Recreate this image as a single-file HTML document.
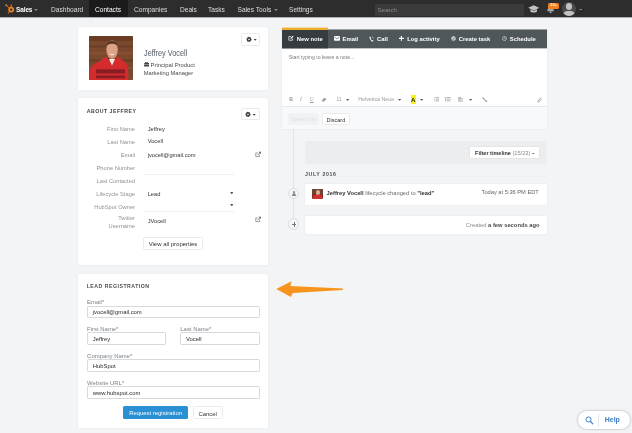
<!DOCTYPE html>
<html><head><meta charset="utf-8">
<style>
*{box-sizing:border-box;margin:0;padding:0}
html,body{width:632px;height:433px;overflow:hidden}
body{background:#f2f4f6;font-family:"Liberation Sans",sans-serif;position:relative;color:#444;font-size:5.72px}
#root{position:absolute;left:0;top:0;width:632px;height:433px;filter:blur(.3px);background:#f2f4f6}
.abs,.abs *{position:absolute}
.nav{left:0;top:0;width:632px;height:17.3px;background:#2d2d2d}
.nav span{color:#dedede;font-size:6.6px;top:5.8px;white-space:nowrap;line-height:8px}
.card{background:#fff;border-radius:1.5px;box-shadow:0 0 0 .5px #e8ebee}
.t{white-space:nowrap;line-height:8px}
.lbl{color:#8e9398;text-align:right;width:60px;left:-3px}
.val{color:#333;left:69.7px}
.inp{background:#fff;border:.6px solid #d6dadd;border-radius:1.2px;height:12.6px}
.inp span{left:4.7px;top:1.6px;font-size:5.86px;color:#2a2a2a;white-space:nowrap;line-height:8px}
.flbl{color:#7d8287;white-space:nowrap;line-height:7px;font-size:5.95px}
.btn{border:.6px solid #e8eaec;border-radius:1.5px;background:#fff;color:#333;text-align:center;white-space:nowrap}
.hd{color:#fff;font-weight:bold;font-size:5.85px;top:7.7px}
</style></head><body><div id="root">
<div class="abs" style="left:0;top:17px;width:632px;height:1px;background:rgba(45,45,45,.35)"></div>
<div class="abs nav">
  <div style="left:89px;top:0;width:39px;height:17.3px;background:#1b1b1b"></div>
  <svg style="left:0;top:0" width="20" height="17" viewBox="0 0 20 17"><circle cx="11.2" cy="9.6" r="2.05" fill="none" stroke="#f58220" stroke-width="1.7"/><path d="M11.2 7.3V5.6M9.5 8.2L6.6 5.6M9.6 11.3L8.4 12.7" stroke="#f58220" stroke-width=".9" fill="none"/><circle cx="11.2" cy="5.3" r=".75" fill="#f58220"/><circle cx="6.3" cy="5.3" r=".95" fill="#f58220"/><circle cx="8.3" cy="12.9" r=".6" fill="#f58220"/></svg>
  <span style="left:16.1px;color:#fff;font-weight:bold;font-size:6.45px;letter-spacing:-.12px">Sales</span>
  <svg style="left:34.4px;top:8.5px" width="3.8" height="2" viewBox="0 0 4 2"><path d="M0 0H4L2 2Z" fill="#8a8a8a"/></svg>
  <span style="left:51px">Dashboard</span>
  <span style="left:95px;color:#fff">Contacts</span>
  <span style="left:134px">Companies</span>
  <span style="left:180px">Deals</span>
  <span style="left:208px">Tasks</span>
  <span style="left:237.6px">Sales Tools</span>
  <svg style="left:273.5px;top:8.7px" width="4" height="2" viewBox="0 0 4 2"><path d="M0 0H4L2 2Z" fill="#8a8a8a"/></svg>
  <span style="left:289px">Settings</span>
  <div style="left:375px;top:3.8px;width:148.5px;height:12.2px;background:#3b3b3b;border-radius:1px"></div>
  <span style="left:377.8px;color:#8c8c8c;font-size:6px;top:5.9px">Search</span>
  <svg style="left:528px;top:4.8px" width="11.4" height="8.4" viewBox="0 0 11.4 8.4"><path d="M5.7 0.2L11.2 2.8L5.7 5.4L0.2 2.8Z" fill="#c4c4c4"/><path d="M2.4 4.3V6.4C4 7.9 7.4 7.9 9 6.4V4.3L5.7 5.9Z" fill="#c4c4c4"/></svg>
  <svg style="left:546px;top:4px" width="10" height="10" viewBox="0 0 10 10"><path d="M1 7.2C2 6 1.6 2 4.6 2S7.2 6 8.2 7.2Z" fill="#a9a9a9"/><circle cx="4.6" cy="8.2" r="1" fill="#a9a9a9"/></svg>
  <div style="left:548.3px;top:2.8px;width:10.5px;height:5.8px;border-radius:1.6px;background:#f5821f"></div>
  <span style="left:550.3px;top:2.9px;font-size:3.8px;color:#fff;line-height:5.6px;font-weight:bold">10+</span>
  <div style="left:562.3px;top:2.3px;width:13.6px;height:13.8px;border-radius:7px;background:#4a4a4a;overflow:hidden">
     <div style="left:3.8px;top:1.2px;width:6px;height:6.6px;border-radius:3.2px;background:#c2c2c2"></div>
     <div style="left:1.2px;top:8.3px;width:11.2px;height:9px;border-radius:5px;background:#c2c2c2"></div>
  </div>
  <svg style="left:578.6px;top:8.7px" width="3.6" height="1.8" viewBox="0 0 4 2"><path d="M0 0H4L2 2Z" fill="#8a8a8a"/></svg>
</div>

<!-- contact card -->
<div class="abs card" style="left:78px;top:27px;width:190.4px;height:63px">
  <div style="left:11px;top:9.1px;width:44px;height:44px;border-radius:1.5px;overflow:hidden;background:#6b4531">
    <svg width="44" height="44" viewBox="0 0 44 44" style="left:0;top:0">
      <rect width="44" height="44" fill="#7a492d"/>
      <rect y="0" width="44" height="5" fill="#6a3c25"/><rect y="9" width="44" height="3" fill="#6e4128"/><rect y="16" width="44" height="2.5" fill="#84502f"/><rect y="23" width="44" height="3" fill="#6c3f27"/><rect y="31" width="44" height="2" fill="#85512f"/>
      <path d="M0.6 44V37C1.5 30.5 5 27.5 10 25.5L16.5 20.5L22 26L29.5 20.5L34 24.5C38 27 39.3 31 39.3 37V44Z" fill="#d42b2c"/>
      <rect x="7" y="33.3" width="29" height="4.2" fill="#7d1c24" opacity=".85"/><rect x="7" y="39.5" width="29" height="2.8" fill="#7d1c24" opacity=".85"/>
      <path d="M20 23L23 29.5L26 23Z" fill="#efe9e6"/>
      <ellipse cx="23.1" cy="13.6" rx="5.7" ry="9.3" fill="#dda388"/>
      <path d="M17.4 11C16.6 2.5 29.6 2.5 28.8 11C27.6 6.6 18.6 6.6 17.4 11Z" fill="#5b3a2b"/>
      <path d="M20.4 17.4Q23.1 20.6 25.8 17.4Q23.1 18.6 20.4 17.4Z" fill="#fff"/>
      <path d="M17.6 14C18 19 20 22.6 23.1 22.9C26.2 22.6 28.2 19 28.6 14C28 18 26 20.6 23.1 20.8C20.2 20.6 18.2 18 17.6 14Z" fill="#c98d74" opacity=".7"/>
    </svg>
  </div>
  <span class="t" style="left:65.6px;top:21.6px;font-size:8.2px;color:#515a64;line-height:10px;transform:scaleX(.89);transform-origin:0 0">Jeffrey Vocell</span>
  <svg style="left:65.7px;top:35.2px" width="5.4" height="4.6" viewBox="0 0 10 9"><rect x="0" y="2" width="10" height="7" rx="1" fill="#444"/><rect x="3" y=".6" width="4" height="3" fill="none" stroke="#444" stroke-width="1.2"/><rect x="0" y="5" width="10" height=".8" fill="#fff"/></svg>
  <span class="t" style="left:72.6px;top:33.6px;font-size:5.85px;color:#4a4a4a">Principal Product</span>
  <span class="t" style="left:65.7px;top:41.7px;font-size:5.75px;color:#4a4a4a">Marketing Manager</span>
  <div class="btn" style="left:163.2px;top:5.5px;width:18.6px;height:13.2px"></div>
  <svg style="left:167.5px;top:8.6px" width="12" height="7" viewBox="0 0 12 7"><circle cx="3" cy="3.4" r="1.7" fill="none" stroke="#3a3a3a" stroke-width="1.7" stroke-dasharray="1.05 .47"/><circle cx="3" cy="3.4" r="1.5" fill="none" stroke="#3a3a3a" stroke-width="1.1"/><path d="M7.7 3.1L10.7 3.1L9.2 4.7Z" fill="#3a3a3a"/></svg>
</div>

<!-- about card -->
<div class="abs card" style="left:78px;top:98.4px;width:190.4px;height:166.6px">
  <span class="t" style="left:8.7px;top:9.3px;font-size:5.2px;letter-spacing:.5px;color:#444;font-weight:bold;line-height:7px">ABOUT JEFFREY</span>
  <div class="btn" style="left:162.6px;top:9.5px;width:19px;height:12.6px"></div>
  <svg style="left:167px;top:12.2px" width="12" height="7" viewBox="0 0 12 7"><circle cx="3" cy="3.4" r="1.7" fill="none" stroke="#3a3a3a" stroke-width="1.7" stroke-dasharray="1.05 .47"/><circle cx="3" cy="3.4" r="1.5" fill="none" stroke="#3a3a3a" stroke-width="1.1"/><path d="M7.7 3.1L10.7 3.1L9.2 4.7Z" fill="#3a3a3a"/></svg>
  <span class="t lbl" style="top:27px">First Name</span><span class="t val" style="top:26.5px">Jeffrey</span>
  <span class="t lbl" style="top:39.9px">Last Name</span><span class="t val" style="top:39.1px">Vocell</span>
  <span class="t lbl" style="top:52.7px">Email</span><span class="t val" style="top:52.4px">jvocell@gmail.com</span>
  <span class="t lbl" style="top:65.5px">Phone Number</span>
  <div style="left:65.7px;top:75.4px;width:90px;height:.6px;background:#eff1f3"></div>
  <span class="t lbl" style="top:78.4px">Last Contacted</span>
  <span class="t lbl" style="top:91.9px">Lifecycle Stage</span><span class="t val" style="top:91.2px">Lead</span>
  <svg style="left:151.8px;top:93.4px" width="3.7" height="2.1" viewBox="0 0 4 2"><path d="M0 0H4L2 2Z" fill="#222"/></svg>
  <span class="t lbl" style="top:104.6px">HubSpot Owner</span>
  <svg style="left:151.8px;top:105.2px" width="3.7" height="2.1" viewBox="0 0 4 2"><path d="M0 0H4L2 2Z" fill="#222"/></svg>
  <div style="left:65.7px;top:112.4px;width:90px;height:.6px;background:#eff1f3"></div>
  <span class="t lbl" style="top:115.6px">Twitter</span>
  <span class="t lbl" style="top:123.2px">Username</span><span class="t val" style="top:118.4px">JVocell</span>
  <svg style="left:177.3px;top:52.2px" width="6.4" height="6.4" viewBox="0 0 12 12"><path d="M8.5 7V10.5H1.5V3.5H5" fill="none" stroke="#666" stroke-width="1.2"/><path d="M5 7.5L10 2.5" stroke="#555" stroke-width="1.5"/><path d="M6.5 1.2H11V5.7Z" fill="#555"/></svg>
  <svg style="left:177.3px;top:117.8px" width="6.4" height="6.4" viewBox="0 0 12 12"><path d="M8.5 7V10.5H1.5V3.5H5" fill="none" stroke="#666" stroke-width="1.2"/><path d="M5 7.5L10 2.5" stroke="#555" stroke-width="1.5"/><path d="M6.5 1.2H11V5.7Z" fill="#555"/></svg>
  <div class="btn" style="left:65.4px;top:138.2px;width:59.2px;height:13.2px"><span class="t" style="left:0;width:100%;top:2.4px;text-align:center;font-size:5.98px">View all properties</span></div>
</div>

<!-- lead registration -->
<div class="abs card" style="left:78px;top:273.6px;width:190.4px;height:154.6px">
  <span class="t" style="left:8.7px;top:9.9px;font-size:5.2px;letter-spacing:.5px;color:#4a4f54;font-weight:bold;line-height:7px">LEAD REGISTRATION</span>
  <span class="flbl" style="left:9.1px;top:25px">Email*</span>
  <div class="inp" style="left:9.1px;top:32.1px;width:172.5px"><span>jvocell@gmail.com</span></div>
  <span class="flbl" style="left:9.1px;top:52px">First Name*</span>
  <div class="inp" style="left:9.1px;top:58.7px;width:78.8px"><span>Jeffrey</span></div>
  <span class="flbl" style="left:102.3px;top:52px">Last Name*</span>
  <div class="inp" style="left:102.3px;top:58.7px;width:79.3px"><span>Vocell</span></div>
  <span class="flbl" style="left:9.1px;top:79.1px">Company Name*</span>
  <div class="inp" style="left:9.1px;top:85.7px;width:172.5px"><span>HubSpot</span></div>
  <span class="flbl" style="left:9.1px;top:106.2px">Website URL*</span>
  <div class="inp" style="left:9.1px;top:112.8px;width:172.5px"><span>www.hubspot.com</span></div>
  <div style="left:45.3px;top:132.7px;width:64.6px;height:12.8px;background:#2b8fd4;border-radius:1.5px"><span class="t" style="left:0;width:100%;text-align:center;top:2.5px;color:#fff;font-size:5.9px">Request registration</span></div>
  <div class="btn" style="left:114.9px;top:132.8px;width:29.7px;height:13px"><span class="t" style="left:0;width:100%;top:2.3px;text-align:center;font-size:5.9px">Cancel</span></div>
</div>

<!-- arrow -->
<svg class="abs" style="left:270px;top:275px" width="80" height="30" viewBox="270 275 80 30"><path d="M276.2 289L291.6 281.2L290.4 285.9L342.9 288.6L342.9 290L292.6 292.9L291 297Z" fill="#f7941e"/></svg>

<!-- note panel -->
<div class="abs" style="left:282.4px;top:27.4px;width:264.5px;height:101.4px">
  <div style="left:0;top:2.3px;width:264.5px;height:99.1px;background:#f8f9fa;box-shadow:0 0 0 .5px #e6e9ec"></div>
  <div style="left:0;top:20.6px;width:264.5px;height:58.3px;background:#fff"></div>
  <div style="left:0;top:1.6px;width:264.5px;height:1px;background:rgba(80,87,91,.5)"></div><div style="left:0;top:2.6px;width:264.5px;height:18px;background:#50575b"></div><div style="left:0;top:20.6px;width:264.5px;height:1px;background:rgba(80,87,91,.35)"></div>
  <div style="left:0;top:0.6px;width:46px;height:20px;background:#363c40"></div><div style="left:0;top:20.6px;width:46px;height:1px;background:rgba(54,60,64,.35)"></div>
  <div style="left:0;top:-.4px;width:46px;height:1px;background:rgba(238,174,44,.4)"></div><div style="left:0;top:0.6px;width:46px;height:2px;background:#eeae2c"></div>
  <div style="left:0;top:78.8px;width:264.5px;height:.6px;background:#e6e9eb"></div>
  <span class="t hd" style="left:14.4px">New note</span>
  <span class="t hd" style="left:60.2px">Email</span>
  <span class="t hd" style="left:94.7px">Call</span>
  <span class="t hd" style="left:124.8px">Log activity</span>
  <span class="t hd" style="left:176.3px">Create task</span>
  <span class="t hd" style="left:227.4px">Schedule</span>
  <!-- header icons -->
  <svg style="left:5.8px;top:8.0px" width="6.2" height="6" viewBox="0 0 12 12"><path d="M9 7V10.5H1.5V3H6" fill="none" stroke="#fff" stroke-width="1.4"/><path d="M4.5 8L5 6L9.5 1.5L11 3L6.5 7.5Z" fill="#fff"/></svg>
  <svg style="left:51.6px;top:8.7px" width="6" height="4.8" viewBox="0 0 12 9.6"><rect x="0" y="0" width="12" height="9.6" rx="1.6" fill="#fff"/><path d="M1.5 2.2L6 5.6L10.5 2.2" fill="none" stroke="#4c5358" stroke-width="1.3"/></svg>
  <svg style="left:86.3px;top:8.2px" width="5" height="6" viewBox="0 0 10 12"><path d="M2.2 .8C1 1.5 .8 3 1.6 5C2.6 7.6 4.4 9.8 6.2 10.8C7.4 11.4 8.4 11 9 10L7.2 8.2L6 9C4.8 8 3.8 6.6 3.2 5L4.4 4.2Z" fill="#fff"/><path d="M6 1.5C7.5 2 8.5 3.2 8.8 4.8" fill="none" stroke="#fff" stroke-width="1"/></svg>
  <svg style="left:117px;top:8.7px" width="4.8" height="4.8" viewBox="0 0 10 10"><path d="M5 0V10M0 5H10" stroke="#fff" stroke-width="2.4"/></svg>
  <svg style="left:168.6px;top:8.6px" width="5" height="5" viewBox="0 0 10 10"><circle cx="5" cy="5" r="4.5" fill="#d5d8da"/><path d="M2.5 5L4.4 7L7.6 3" fill="none" stroke="#4c5358" stroke-width="1.5"/></svg>
  <svg style="left:219.6px;top:8.6px" width="5" height="5" viewBox="0 0 10 10"><circle cx="5" cy="5" r="4" fill="none" stroke="#d5d8da" stroke-width="1.3"/><path d="M5 2.5V5.3H7" fill="none" stroke="#d5d8da" stroke-width="1.1"/></svg>
  <span class="t" style="left:6.3px;top:25.7px;color:#7c7c7c;font-size:5.17px">Start typing to leave a note...</span>
  <!-- toolbar -->
  <span class="t" style="left:6.9px;top:68px;color:#999;font-size:5.2px;font-weight:bold">B</span>
  <span class="t" style="left:17.6px;top:68px;color:#999;font-size:5.4px;font-style:italic;font-family:'Liberation Serif',serif">I</span>
  <span class="t" style="left:27.6px;top:68px;color:#999;font-size:5.2px;text-decoration:underline;font-family:'Liberation Serif',serif">U</span>
  <svg style="left:39px;top:69.4px" width="6" height="5" viewBox="0 0 12 10"><path d="M1 7L7 1.5L11 4L5 9.5H2.5Z" fill="#999"/><path d="M1 7L2.5 9.5H5L3.5 5.8Z" fill="#ccc"/></svg>
  <span class="t" style="left:54.1px;top:68.6px;color:#999;font-size:4.9px">11</span>
  <svg style="left:63.6px;top:71.4px" width="3.3" height="1.9" viewBox="0 0 4 2"><path d="M0 0H4L2 2Z" fill="#555"/></svg>
  <span class="t" style="left:75.8px;top:67.9px;color:#999;font-size:5.3px">Helvetica Neue</span>
  <svg style="left:116.1px;top:71.4px" width="3.3" height="1.9" viewBox="0 0 4 2"><path d="M0 0H4L2 2Z" fill="#555"/></svg>
  <div style="left:128.3px;top:68.1px;width:5.2px;height:8.2px;background:#f6f21a"></div>
  <span class="t" style="left:128.7px;top:68.3px;color:#222;font-size:6px;font-weight:bold">A</span>
  <svg style="left:137.6px;top:71.4px" width="3.3" height="1.9" viewBox="0 0 4 2"><path d="M0 0H4L2 2Z" fill="#555"/></svg>
  <svg style="left:151.3px;top:69.8px" width="5.6" height="4.4" viewBox="0 0 11 9"><path d="M0 1H1.6M0 4.5H1.6M0 8H1.6M3 1H11M3 4.5H11M3 8H11" stroke="#999" stroke-width="1.5"/></svg>
  <svg style="left:163px;top:69.8px" width="5.8" height="4.4" viewBox="0 0 11 9"><path d="M.8 0V9M3 1H11M3 4.5H11M3 8H11" stroke="#999" stroke-width="1.5"/></svg>
  <svg style="left:175.2px;top:69.6px" width="5.6" height="4.6" viewBox="0 0 11 9"><path d="M0 1H6M0 3.3H11M0 5.6H7M0 8H11" stroke="#999" stroke-width="1.4"/></svg>
  <svg style="left:187px;top:71.4px" width="3.3" height="1.9" viewBox="0 0 4 2"><path d="M0 0H4L2 2Z" fill="#555"/></svg>
  <svg style="left:199.6px;top:69.2px" width="5.6" height="5.6" viewBox="0 0 10 10"><path d="M1.5 1.5L8.5 8.5" stroke="#999" stroke-width="2.2" stroke-linecap="round"/><path d="M3.8 3.8L6.2 6.2" stroke="#fff" stroke-width=".8"/></svg>
  <svg style="left:254.8px;top:69.2px" width="5" height="6" viewBox="0 0 10 12"><path d="M7.5 1.5L2 7.5C1 9 3 11 4.5 9.5L9 4.5" fill="none" stroke="#999" stroke-width="1.7" stroke-linecap="round"/></svg>
  <div class="btn" style="left:39.7px;top:86px;width:27.7px;height:11.9px;"><span class="t" style="left:0;width:100%;top:1.5px;text-align:center;font-size:5.5px;color:#333">Discard</span></div>
  <div style="left:6px;top:86px;width:31px;height:11.5px;background:#f0f2f3;border-radius:1.5px"><span class="t" style="left:0;width:100%;top:1.7px;text-align:center;font-size:5.6px;color:#dfe2e4">Save note</span></div>
</div>

<!-- timeline -->
<div class="abs" style="left:292.7px;top:129px;width:.7px;height:95px;background:#e2e5e8"></div>
<div class="abs" style="left:305px;top:140.8px;width:241.8px;height:23px;background:#ebedef;border-radius:1px">
  <div class="btn" style="left:163.5px;top:5.4px;width:71.8px;height:12.8px;border-color:#e3e6e8"><span class="t" style="left:5.6px;top:2.1px;font-size:5.5px;font-weight:bold;color:#333">Filter timeline <span style="position:static;font-weight:normal;color:#8a8a8a;font-size:5.7px">(15/23)</span></span>
  <svg style="left:62.4px;top:5.6px" width="2.7" height="1.6" viewBox="0 0 4 2"><path d="M0 0H4L2 2Z" fill="#333"/></svg></div>
</div>
<span class="abs t" style="left:305px;top:169.5px;font-size:5.2px;letter-spacing:.65px;color:#4a4f54;font-weight:bold">JULY 2016</span>
<div class="abs" style="left:339px;top:176.3px;width:207.8px;height:.6px;background:#eef0f2"></div>
<div class="abs card" style="left:305px;top:183.6px;width:241.8px;height:21.2px">
  <div style="left:7.2px;top:5px;width:10.8px;height:10.8px;background:#8c2a2a;border-radius:1px;overflow:hidden"><div style="left:0;top:0;width:10.8px;height:5px;background:#70452f"></div><div style="left:3.4px;top:1.6px;width:4px;height:4.6px;border-radius:2.3px;background:#dcae94"></div><div style="left:.8px;top:6.6px;width:9.2px;height:5px;background:#d32f2f;border-radius:2px 2px 0 0"></div></div>
  <span class="t" style="left:21.6px;top:5.2px;font-size:5.76px;color:#6a6a6a"><b style="position:static;color:#333">Jeffrey Vocell</b> lifecycle changed to <b style="position:static;color:#333">"lead"</b></span>
  <span class="t" style="right:8px;top:4.6px;font-size:5.7px;color:#666">Today at 5:36 PM EDT</span>
</div>
<div class="abs card" style="left:305px;top:215.9px;width:241.8px;height:18.2px">
  <span class="t" style="right:7.2px;top:5.1px;font-size:5.8px;color:#8a8a8a">Created <b style="position:static;color:#4a4a4a">a few seconds ago</b></span>
</div>
<div class="abs" style="left:287.8px;top:187.7px;width:11.6px;height:11.6px;border-radius:6px;background:#f2f4f6;border:.6px solid #dde0e3">
  <div style="left:4.1px;top:2.6px;width:2.3px;height:2.5px;border-radius:1.2px;background:#8a8a8a"></div><div style="left:3px;top:5.5px;width:4.5px;height:2.3px;border-radius:1.3px 1.3px 0 0;background:#8a8a8a"></div>
</div>
<div class="abs" style="left:287.8px;top:218.2px;width:11.6px;height:11.6px;border-radius:6px;background:#f2f4f6;border:.6px solid #dde0e3">
  <div style="left:2.9px;top:4.9px;width:4.8px;height:.7px;background:#777"></div><div style="left:4.95px;top:2.85px;width:.7px;height:4.8px;background:#777"></div>
</div>

<!-- help -->
<div class="abs" style="left:577.3px;top:410.3px;width:53.4px;height:19.4px;border-radius:10px;background:#fff;border:.7px solid #d5d9dd;box-shadow:0 0 2px rgba(0,0,0,.12)">
  <svg style="left:7px;top:5px" width="8.8" height="8.8" viewBox="0 0 9 9"><circle cx="3.6" cy="3.6" r="2.6" fill="none" stroke="#3f7fc6" stroke-width="1"/><path d="M5.6 5.6L8 8" stroke="#3f7fc6" stroke-width="1.2" stroke-linecap="round"/></svg>
  <div style="left:19.8px;top:3px;width:.6px;height:12.5px;background:#e3e6e9"></div>
  <span class="t" style="left:26.4px;top:4.8px;font-size:7px;font-weight:bold;color:#3f7fc6">Help</span>
</div>
</div></body></html>
